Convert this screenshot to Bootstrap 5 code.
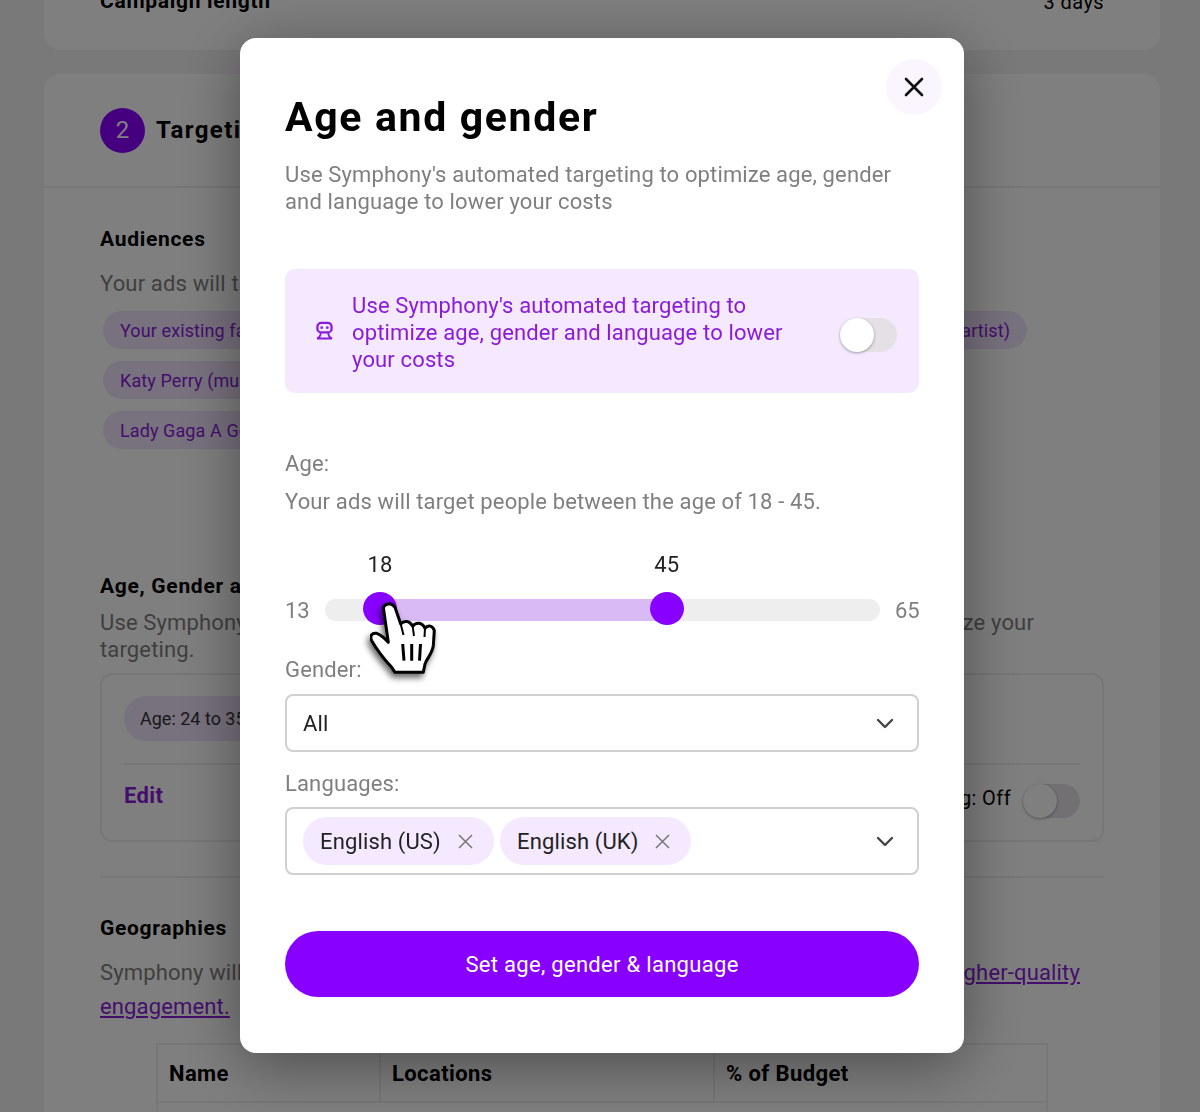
<!DOCTYPE html>
<html lang="en">
<head>
  <meta charset="UTF-8">
  <meta name="viewport" content="width=device-width, initial-scale=1.0">
  <title>Age and gender</title>
  <link href="https://cdn.jsdelivr.net/npm/bootstrap@5.3.0/dist/css/bootstrap.min.css" rel="stylesheet">
  <style>
    html, body { height: 100%; overflow: hidden; }
    body { background: #f5f2f5; font-family: Roboto, "Liberation Sans", sans-serif; font-size: 20px; color: #000; letter-spacing: .4px; }
    .page-shell { padding: 0 40px 0 44px; }
    .panel { background: #fff; border-radius: 16px; }
    .panel-top { height: 50px; border-radius: 0 0 16px 16px; padding: 0 56px 33px; overflow: hidden; }
    .panel-top .fw-bold { font-size: 21px; letter-spacing: .7px; }
    .panel-main { margin-top: 24px; height: 1038px; border-radius: 16px 16px 0 0; overflow: hidden; }
    .panel-head { height: 114px; padding: 0 56px; border-bottom: 2px solid #eee; font-size: 24px; font-weight: 700; gap: 11px; letter-spacing: 1.4px; }
    .step-dot { width: 45px; height: 45px; border-radius: 50%; background: #8800ff; color: #fff; font-size: 24px; font-weight: 400; letter-spacing: 0; }
    .panel-body { padding: 37px 56px 0; }
    .sec-title { font-size: 21px; font-weight: 700; line-height: 28px; letter-spacing: .7px; }
    .sec-text { color: #7f7f7f; font-size: 22px; line-height: 27px; letter-spacing: .15px; }
    .aud-text { margin-top: 17px; }
    .chip-row { margin-top: 14px; width: 924px; margin-left: 3px; height: 38px; }
    .chip-row + .chip-row { margin-top: 12px; }
    .tag { background: #f0e2fd; color: #8a1cd9; border-radius: 19px; padding: 0 17px; line-height: 39px; font-size: 18px; white-space: nowrap; letter-spacing: .1px; }
    .age-title { margin-top: 123px; }
    .age-text { margin-top: 9px; width: 934px; }
    .age-box { margin-top: 10px; height: 169px; border: 2px solid #eee; border-radius: 12px; padding: 21px 22px 0; }
    .age-tag { background: #f0e2fd; color: #333; border-radius: 23px; padding: 0 16px; line-height: 45px; font-size: 18px; width: 300px; letter-spacing: 0; }
    .box-rule { height: 2px; background: #eee; margin-top: 22px; }
    .box-foot { height: 60px; }
    .edit-link { color: #8a1cd9; font-weight: 700; font-size: 22px; }
    .off-label { margin-top: 6px; }
    .box-foot .toggle-track { margin-top: 12px; }
    .page-rule { height: 2px; background: #eee; margin-top: 34px; }
    .geo-title { margin-top: 36px; }
    .geo-text { margin-top: 14px; width: 980px; font-size: 22px; line-height: 34px; color: #7f7f7f; letter-spacing: .15px; }
    .geo-text a { color: #8a1cd9; }
    .geo-table { width: 892px; margin: 19px 0 0 56px; border: 2px solid #eee; border-bottom: 0; height: 68px; }
    .geo-row { height: 58px; border-bottom: 2px solid #eee; font-weight: 700; font-size: 22px; }
    .geo-row div { padding: 0 11px; border-right: 2px solid #eee; }
    .geo-name { width: 223px; }
    .geo-loc { width: 334px; }

    .modal-dialog.age-dialog { max-width: 724px; width: 724px; margin: 38px 0 0 240px; }
    .age-dialog .modal-content { height: 1015px; border: 0; border-radius: 16px; padding: 0 45px; box-shadow: 0 12px 60px rgba(0,0,0,.4); letter-spacing: .14px; }
    .close-round { top: 21px; right: 22px; width: 56px; height: 56px; border: 0; border-radius: 50%; background: #faf5ff; }
    .dlg-title { font-size: 41px; font-weight: 700; line-height: 50px; margin: 54px 0 0; letter-spacing: 1.65px; }
    .dlg-sub { margin-top: 19px; color: #7f7f7f; font-size: 22px; line-height: 27px; }
    .auto-box { margin-top: 54px; height: 124px; background: #f4e9fe; border-radius: 10px; padding: 0 22px 0 31px; color: #8a1cd9; font-size: 22px; line-height: 27px; gap: 19px; }
    .auto-text { width: 446px; padding-top: 2px; }
    .toggle-track { width: 57px; height: 34px; border-radius: 17px; background: #e4e0e6; flex: none; }
    .auto-box .toggle-track { margin-top: 8px; }
    .toggle-knob { left: 0; top: 0; width: 34px; height: 34px; border-radius: 50%; background: #fff; box-shadow: 0 1px 3px rgba(0,0,0,.35); }
    .dlg-label { color: #7f7f7f; font-size: 22px; line-height: 27px; }
    .age-label { margin-top: 57px; }
    .age-desc { margin-top: 11px; }
    .range-row { margin-top: 77px; height: 34px; color: #7f7f7f; font-size: 22px; }
    .range-end { flex: none; padding-top: 2px; letter-spacing: 0; }
    .range-min { width: 25px; }
    .range-max { width: 24px; }
    .range-track { height: 22px; border-radius: 11px; background: #eee; margin: 0 15px; top: 1px; }
    .range-fill { top: 0; bottom: 0; background: #d9baf5; }
    .range-thumb { top: -7px; width: 34px; height: 33px; margin-left: -17px; border-radius: 50%; background: #8800ff; }
    .range-val { top: -48px; width: 60px; margin-left: -30px; text-align: center; color: #222; font-size: 22px; line-height: 27px; }
    .hand-cursor { left: 85px; top: 10px; filter: drop-shadow(-2px 4px 3px rgba(0,0,0,.6)); }
    .gender-label { margin-top: 30px; }
    .pick-box { border: 2px solid #d0d0d0; border-radius: 8px; padding: 0 23px 0 16px; color: #222; font-size: 22px; }
    .pick-gender { margin-top: 11px; height: 58px; }
    .langs-label { margin-top: 18px; }
    .pick-langs { margin-top: 10px; height: 68px; }
    .lang-group { gap: 6px; }
    .lang-chip { height: 48px; border-radius: 24px; background: #f4e9fe; padding: 0 21px 0 17px; width: 191px; white-space: nowrap; }
    .go-btn { margin-top: 56px; height: 66px; border-radius: 33px; background: #8800ff; border: 0; color: #fff; font-size: 22px; letter-spacing: .3px; }
    .go-btn:hover { background: #8800ff; color: #fff; }
  </style>
</head>
<body>
  <div class="page-shell">
    <div class="panel panel-top d-flex justify-content-between align-items-end">
      <span class="fw-bold">Campaign length</span>
      <span>3 days</span>
    </div>

    <div class="panel panel-main">
      <div class="panel-head d-flex align-items-center">
        <span class="step-dot d-flex align-items-center justify-content-center">2</span>
        <span>Targeting</span>
      </div>
      <div class="panel-body">
        <div class="sec-title">Audiences</div>
        <div class="sec-text aud-text">Your ads will target these audiences</div>
        <div class="chip-row d-flex justify-content-between">
          <span class="tag">Your existing fans</span>
          <span class="tag">Ariana Grande (music artist)</span>
        </div>
        <div class="chip-row d-flex"><span class="tag">Katy Perry (musician)</span></div>
        <div class="chip-row d-flex"><span class="tag">Lady Gaga A Go Go</span></div>

        <div class="sec-title age-title">Age, Gender and Language</div>
        <div class="sec-text age-text d-flex justify-content-between">
          <span>Use Symphony's</span><span>automated targeting to optimize your</span>
        </div>
        <div class="sec-text">targeting.</div>
        <div class="age-box">
          <div class="age-tag">Age: 24 to 35</div>
          <div class="box-rule"></div>
          <div class="box-foot d-flex justify-content-between align-items-center">
            <span class="edit-link">Edit</span>
            <span class="d-flex align-items-center gap-2">
              <span class="off-label">Automated targeting: Off</span>
              <span class="toggle-track position-relative ms-1"><span class="toggle-knob position-absolute"></span></span>
            </span>
          </div>
        </div>
        <div class="page-rule"></div>
        <div class="sec-title geo-title">Geographies</div>
        <div class="geo-text">
          <div class="d-flex justify-content-between"><span>Symphony will</span><a href="#">target higher-quality</a></div>
          <a href="#">engagement.</a>
        </div>
        <div class="geo-table">
          <div class="geo-row d-flex align-items-stretch">
            <div class="geo-name d-flex align-items-center">Name</div>
            <div class="geo-loc d-flex align-items-center">Locations</div>
            <div class="flex-grow-1 d-flex align-items-center border-0">% of Budget</div>
          </div>
        </div>
      </div>
    </div>
  </div>

  <div class="modal-backdrop show"></div>
  <div class="modal d-block" tabindex="-1">
    <div class="modal-dialog age-dialog">
      <div class="modal-content">
        <button class="close-round position-absolute d-flex align-items-center justify-content-center" type="button" aria-label="Close">
          <svg width="20" height="20" viewBox="0 0 20 20" fill="none" stroke="#111" stroke-width="2.6" stroke-linecap="round"><path d="M2 2 18 18M18 2 2 18"/></svg>
        </button>

        <h1 class="dlg-title">Age and gender</h1>
        <div class="dlg-sub">Use Symphony's automated targeting to optimize age, gender<br>and language to lower your costs</div>

        <div class="auto-box d-flex align-items-center">
          <svg width="17" height="20" viewBox="0 0 18 20" fill="none" stroke="#8a1cd9" stroke-width="2.4">
            <rect x="1.5" y="1.5" width="15" height="10" rx="4"/>
            <circle cx="6" cy="6.500" r="1.400" fill="#8a1cd9" stroke="none"/>
            <circle cx="12" cy="6.500" r="1.400" fill="#8a1cd9" stroke="none"/>
            <path d="M5 11.500C5 15 4 17 1 17.500M13 11.500C13 15 14 17 17 17.500M1 18H17" stroke-width="2"/>
          </svg>
          <span class="auto-text flex-grow-1">Use Symphony's automated targeting to optimize age, gender and language to lower your costs</span>
          <span class="toggle-track position-relative"><span class="toggle-knob position-absolute"></span></span>
        </div>

        <div class="dlg-label age-label">Age:</div>
        <div class="dlg-label age-desc">Your ads will target people between the age of 18 - 45.</div>

        <div class="range-row d-flex align-items-center position-relative">
          <span class="range-end range-min">13</span>
          <div class="range-track flex-grow-1 position-relative">
            <div class="range-fill position-absolute" style="left:9.9%;width:51.7%"></div>
            <div class="range-thumb position-absolute" style="left:9.9%"></div>
            <div class="range-thumb position-absolute" style="left:61.6%"></div>
            <div class="range-val position-absolute" style="left:9.9%">18</div>
            <div class="range-val position-absolute" style="left:61.6%">45</div>
          </div>
          <span class="range-end range-max text-end">65</span>
          <svg class="hand-cursor position-absolute" width="70" height="75" viewBox="0 0 70 75">
            <path d="M13.300 5.300C15 1.500 21 0 25 5.300L30.700 22C34 18.500 39 18 42.700 24.300C46 20 52 20 55 26.300C58 22.500 63 23.500 64.300 28.700L63.300 43.700C62 52 57 56 55 62L53.300 70.300L25 70.300L21.700 65.300C14 57 7 48 1.700 38.700C-.5 34 2 30.500 6.700 31.300C11 33 15 36.500 18.300 40.300Z" fill="#fff" stroke="#000" stroke-width="3" stroke-linejoin="round"/>
            <path d="M30.700 22 33.500 33M42.700 24.300 44 34M55 26.300 54.500 35" fill="none" stroke="#000" stroke-width="2"/>
            <path d="M32.700 42 34 58.700M41.700 42V58.700M50.500 42 49.500 58.700" fill="none" stroke="#000" stroke-width="3"/>
          </svg>
        </div>

        <div class="dlg-label gender-label">Gender:</div>
        <div class="pick-box pick-gender d-flex align-items-center justify-content-between">
          <span>All</span>
          <svg width="18" height="11" viewBox="0 0 18 11" fill="none" stroke="#444" stroke-width="2.4" stroke-linecap="round" stroke-linejoin="round"><path d="M2 2 9 9 16 2"/></svg>
        </div>

        <div class="dlg-label langs-label">Languages:</div>
        <div class="pick-box pick-langs d-flex align-items-center justify-content-between">
          <div class="lang-group d-flex">
            <span class="lang-chip d-flex align-items-center justify-content-between">English (US)
              <svg width="15" height="15" viewBox="0 0 15 15" fill="none" stroke="#777" stroke-width="1.5"><path d="M1 1 14 14M14 1 1 14"/></svg>
            </span>
            <span class="lang-chip d-flex align-items-center justify-content-between">English (UK)
              <svg width="15" height="15" viewBox="0 0 15 15" fill="none" stroke="#777" stroke-width="1.5"><path d="M1 1 14 14M14 1 1 14"/></svg>
            </span>
          </div>
          <svg width="18" height="11" viewBox="0 0 18 11" fill="none" stroke="#444" stroke-width="2.4" stroke-linecap="round" stroke-linejoin="round"><path d="M2 2 9 9 16 2"/></svg>
        </div>

        <button class="btn go-btn w-100" type="button">Set age, gender &amp; language</button>
      </div>
    </div>
  </div>

  <script src="https://cdn.jsdelivr.net/npm/bootstrap@5.3.0/dist/js/bootstrap.bundle.min.js"></script>
</body>
</html>
